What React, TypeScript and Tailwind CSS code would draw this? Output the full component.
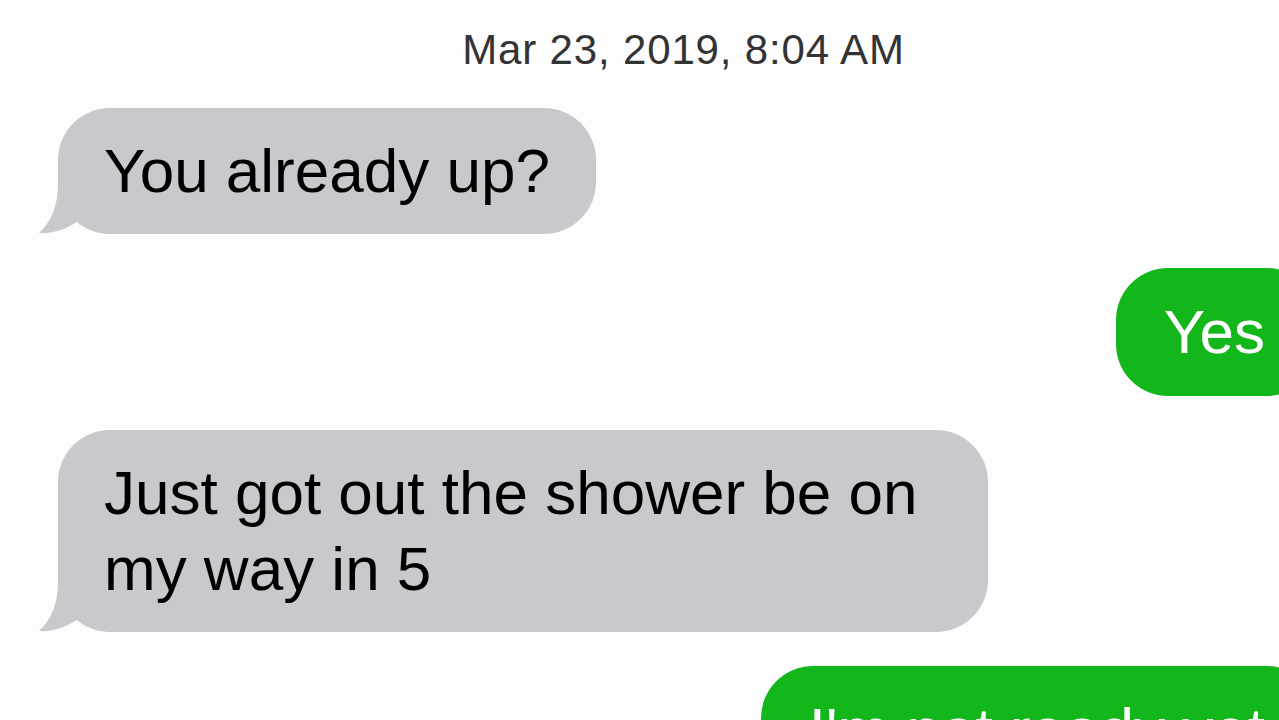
const font = { fontFamily: '"Liberation Sans", Arial, sans-serif' };

type Msg = { id: number; text: string; mine: boolean };

const messages: Msg[] = [
  { id: 1, text: 'You already up?', mine: false },
  { id: 2, text: 'Yes', mine: true },
  { id: 3, text: 'Just got out the shower be on my way in 5', mine: false },
  { id: 4, text: "I'm not ready yet", mine: true },
];

const Tail = () => (
  <svg
    className="absolute -left-[19px] bottom-0"
    width="60"
    height="50"
    viewBox="0 0 60 50"
  >
    <path
      d="M19 0 C19 22 12 38 0 49 C12 50 28 46 40 36 L60 36 L60 0 Z"
      fill="#c9c8cd"
    />
  </svg>
);

const App = () => {
  return (
    <div
      className="h-[720px] w-[1279px] overflow-hidden bg-[#fdfdfd] text-black"
      style={font}
    >
      {/* Timestamp */}
      <div className="pl-[88px] pt-[24px] text-center text-[42px] leading-[52px] tracking-[0.02em] text-[#333333]">
        Mar 23, 2019, 8:04 AM
      </div>

      <div className="mt-[32px] flex flex-col gap-[34px]">
        {messages.map((m) =>
          m.mine ? (
            <div key={m.id} className="flex justify-end">
              <div className="-mr-[40px] rounded-[52px] bg-[#13b61b] py-[26px] pl-[48px] pr-[54px] text-[62px] leading-[76px] text-white">
                {m.text}
              </div>
            </div>
          ) : (
            <div key={m.id} className="flex pl-[58px]">
              <div className="relative max-w-[930px] rounded-[52px] bg-[#c9c8cd] py-[25px] pl-[46px] pr-[46px] text-[62px] leading-[76px]">
                <Tail />
                <div className="relative">{m.text}</div>
              </div>
            </div>
          )
        )}
      </div>
    </div>
  );
};

export default App;
